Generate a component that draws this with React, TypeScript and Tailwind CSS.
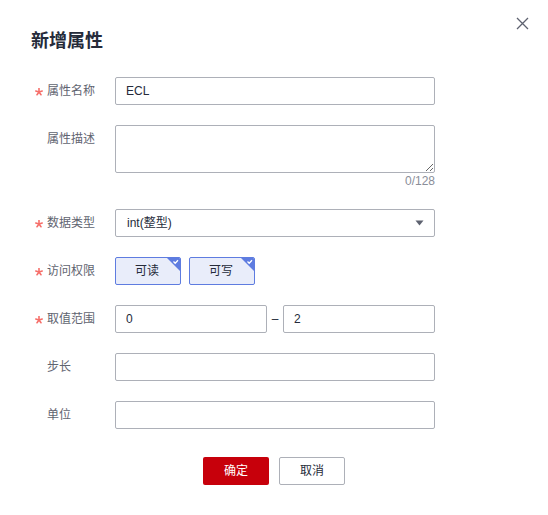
import React from "react";

const font = "font-['Liberation_Sans','Noto_Sans_CJK_SC',sans-serif]";

function Star() {
  return (
    <svg width="8" height="8" viewBox="-4 -4 8 8">
      <g stroke="#f66f6a" strokeWidth="1.6" strokeLinecap="round">
        <line x1="0" y1="0" x2="0" y2="-3.4" />
        <line x1="0" y1="0" x2="3.2" y2="-1.05" />
        <line x1="0" y1="0" x2="2" y2="2.75" />
        <line x1="0" y1="0" x2="-2" y2="2.75" />
        <line x1="0" y1="0" x2="-3.2" y2="-1.05" />
      </g>
    </svg>
  );
}

function Label({ text, required }: { text: string; required?: boolean }) {
  return (
    <div className="w-[80px] shrink-0 flex items-start h-[28px] leading-[28px] text-[12px] text-[#5f6470]">
      <span className="w-[12px] h-[28px] flex items-center pt-[2px]">{required ? <Star /> : null}</span>
      <span>{text}</span>
    </div>
  );
}

function Input({ value, className = "w-[320px]" }: { value?: string; className?: string }) {
  return (
    <input
      className={`${className} h-[28px] border border-[#adb0b8] rounded-[2px] px-[10px] text-[12px] text-[#252b3a] outline-none`}
      defaultValue={value}
    />
  );
}

function CheckTag({ text }: { text: string }) {
  return (
    <div className="relative w-[66px] h-[28px] border border-[#5e7ce0] bg-[#e9edfa] rounded-[2px] flex items-center justify-center text-[12px] text-[#252b3a] overflow-hidden">
      <span className="mr-[2px]">{text}</span>
      <svg className="absolute top-0 right-0" width="13" height="13" viewBox="0 0 13 13">
        <polygon points="0,0 13,0 13,13" fill="#5e7ce0" />
        <polyline points="6.5,3.5 8.2,5.2 11,2.2" fill="none" stroke="#fff" strokeWidth="1.3" />
      </svg>
    </div>
  );
}

export default function App() {
  return (
    <div className={`relative w-[548px] h-[515px] bg-white ${font}`}>
      <button className="absolute top-[17px] right-[19px] w-[13px] h-[13px]">
        <svg width="13" height="13" viewBox="0 0 13 13">
          <path d="M1 1L12 12M12 1L1 12" stroke="#5e6270" strokeWidth="1.3" />
        </svg>
      </button>
      <h2 className="pt-[30px] pl-[31px] text-[18px] leading-[22px] font-bold text-[#252b3a]">新增属性</h2>

      <div className="mt-[25px] pl-[35px] flex flex-col gap-[20px]">
        <div className="flex">
          <Label text="属性名称" required />
          <Input value="ECL" />
        </div>

        <div className="flex">
          <Label text="属性描述" />
          <div className="flex flex-col w-[320px]">
            <textarea className="w-[320px] h-[48px] border border-[#adb0b8] rounded-[2px] px-[10px] py-[5px] text-[12px] outline-none resize-y" />
            <div className="text-right text-[12px] leading-[16px] text-[#8a8e99]">0/128</div>
          </div>
        </div>

        <div className="flex">
          <Label text="数据类型" required />
          <div className="w-[320px] h-[28px] border border-[#adb0b8] rounded-[2px] pl-[11px] pr-[10px] flex items-center justify-between text-[12px] text-[#252b3a]">
            <span>int(整型)</span>
            <svg width="9" height="6" viewBox="0 0 9 6">
              <polygon points="0.5,0.5 8.5,0.5 4.5,5.5" fill="#5e6270" />
            </svg>
          </div>
        </div>

        <div className="flex">
          <Label text="访问权限" required />
          <div className="flex gap-[8px]">
            <CheckTag text="可读" />
            <CheckTag text="可写" />
          </div>
        </div>

        <div className="flex">
          <Label text="取值范围" required />
          <div className="flex items-center">
            <Input value="0" className="w-[152px]" />
            <span className="w-[16px] text-center text-[12px] text-[#252b3a]">–</span>
            <Input value="2" className="w-[152px]" />
          </div>
        </div>

        <div className="flex">
          <Label text="步长" />
          <Input />
        </div>

        <div className="flex">
          <Label text="单位" />
          <Input />
        </div>
      </div>

      <div className="mt-[28px] flex justify-center gap-[10px]">
        <button className="w-[66px] h-[28px] rounded-[2px] bg-[#c7000b] text-white text-[12px]">确定</button>
        <button className="w-[66px] h-[28px] rounded-[2px] border border-[#adb0b8] bg-white text-[#252b3a] text-[12px]">取消</button>
      </div>
    </div>
  );
}
